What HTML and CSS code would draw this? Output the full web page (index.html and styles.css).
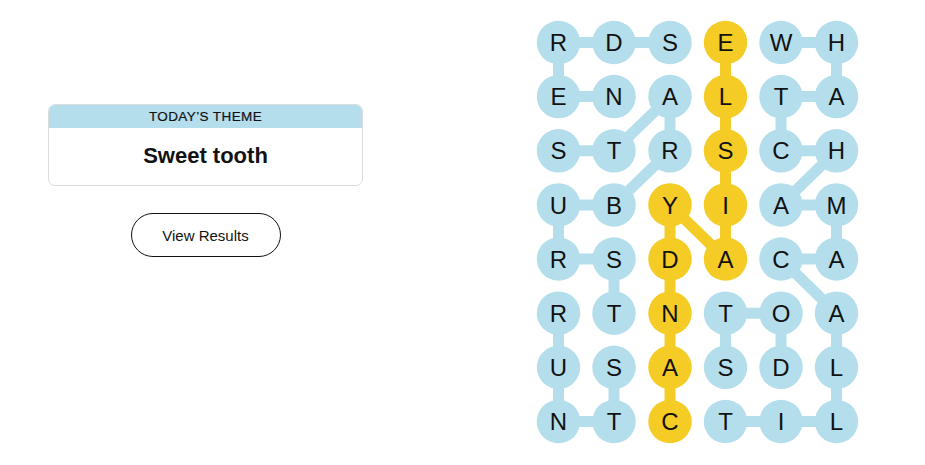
FILE: index.html
```html
<!DOCTYPE html>
<html lang="en">
<head>
<meta charset="utf-8">
<title>Strands</title>
<link rel="stylesheet" href="styles.css">
</head>
<body>
<main class="page">
  <section class="side">
    <div class="theme-card">
      <div class="theme-head">TODAY’S THEME</div>
      <div class="theme-body">Sweet tooth</div>
    </div>
    <button class="results-btn" type="button">View Results</button>
  </section>
  <section class="board">
    <svg class="board-svg" width="324" height="424" viewBox="0 0 324 424">
      <g class="lines-blue" stroke-width="11" stroke-linecap="butt">
        <!-- NERDS -->
        <line x1="78" y1="76.6" x2="22.5" y2="76.6"/>
        <line x1="22.5" y1="76.6" x2="22.5" y2="22.5"/>
        <line x1="22.5" y1="22.5" x2="134" y2="22.5"/>
        <!-- STARBURST -->
        <line x1="22.5" y1="130.8" x2="78" y2="130.8"/>
        <line x1="78" y1="130.8" x2="134" y2="76.6"/>
        <line x1="134" y1="76.6" x2="134" y2="130.8"/>
        <line x1="134" y1="130.8" x2="78" y2="184.9"/>
        <line x1="78" y1="184.9" x2="22.5" y2="184.9"/>
        <line x1="22.5" y1="184.9" x2="22.5" y2="239"/>
        <line x1="22.5" y1="239" x2="78" y2="239"/>
        <line x1="78" y1="239" x2="78" y2="293.2"/>
        <!-- RUNTS -->
        <line x1="22.5" y1="293.2" x2="22.5" y2="401.5"/>
        <line x1="22.5" y1="401.5" x2="78" y2="401.5"/>
        <line x1="78" y1="401.5" x2="78" y2="347.3"/>
        <!-- WHATCHAMACALLIT -->
        <line x1="245" y1="22.5" x2="300.5" y2="22.5"/>
        <line x1="300.5" y1="22.5" x2="300.5" y2="76.6"/>
        <line x1="300.5" y1="76.6" x2="245" y2="76.6"/>
        <line x1="245" y1="76.6" x2="245" y2="130.8"/>
        <line x1="245" y1="130.8" x2="300.5" y2="130.8"/>
        <line x1="300.5" y1="130.8" x2="245" y2="184.9"/>
        <line x1="245" y1="184.9" x2="300.5" y2="184.9"/>
        <line x1="300.5" y1="184.9" x2="300.5" y2="239"/>
        <line x1="300.5" y1="239" x2="245" y2="239"/>
        <line x1="245" y1="239" x2="300.5" y2="293.2"/>
        <line x1="300.5" y1="293.2" x2="300.5" y2="401.5"/>
        <line x1="300.5" y1="401.5" x2="189.5" y2="401.5"/>
        <!-- DOTS -->
        <line x1="245" y1="347.3" x2="245" y2="293.2"/>
        <line x1="245" y1="293.2" x2="189.5" y2="293.2"/>
        <line x1="189.5" y1="293.2" x2="189.5" y2="347.3"/>
      </g>
      <g class="lines-gold" stroke-width="11">
        <line x1="134" y1="401.5" x2="134" y2="184.9"/>
        <line x1="134" y1="184.9" x2="189.5" y2="239"/>
        <line x1="189.5" y1="239" x2="189.5" y2="22.5"/>
      </g>
      <g class="cells" id="cells"></g>
    </svg>
  </section>
</main>
<script src="board.js"></script>
</body>
</html>
```
FILE: board.js
```js
(function () {
  var rows = ["RDSEWH", "ENALTA", "STRSCH", "UBYIAM", "RSDACA", "RTNTOA", "USASDL", "NTCTIL"];
  var gold = { "0,3": 1, "1,3": 1, "2,3": 1, "3,3": 1, "4,3": 1, "3,2": 1, "4,2": 1, "5,2": 1, "6,2": 1, "7,2": 1 };
  var xs = [22.5, 78, 134, 189.5, 245, 300.5];
  var ys = [22.5, 76.6, 130.8, 184.9, 239, 293.2, 347.3, 401.5];
  var ns = "http://www.w3.org/2000/svg";
  var g = document.getElementById("cells");
  for (var r = 0; r < rows.length; r++) {
    for (var c = 0; c < 6; c++) {
      var circ = document.createElementNS(ns, "circle");
      circ.setAttribute("cx", xs[c]);
      circ.setAttribute("cy", ys[r]);
      circ.setAttribute("r", 21.75);
      circ.setAttribute("class", gold[r + "," + c] ? "cell cell-gold" : "cell cell-blue");
      g.appendChild(circ);
      var t = document.createElementNS(ns, "text");
      t.setAttribute("x", xs[c]);
      t.setAttribute("y", ys[r] + 8.6);
      t.setAttribute("class", "letter");
      t.textContent = rows[r].charAt(c);
      g.appendChild(t);
    }
  }
})();
```
FILE: styles.css
```css
html, body {
  margin: 0;
  padding: 0;
  background: #ffffff;
}

body {
  font-family: "Liberation Sans", Arial, sans-serif;
  color: #121212;
}

.page {
  display: flex;
  align-items: flex-start;
  width: 925px;
  height: 465px;
}

.side {
  display: flex;
  flex-direction: column;
  align-items: center;
  width: 315px;
  margin-left: 48px;
  margin-top: 104px;
}

.theme-card {
  width: 100%;
  box-sizing: border-box;
  border: 1px solid #dcdcdc;
  border-radius: 7px;
  overflow: hidden;
}

.theme-head {
  background: #b5deed;
  height: 24px;
  line-height: 25px;
  text-align: center;
  font-size: 13.5px;
  letter-spacing: 0.4px;
  color: #121212;
  margin: -1px -1px 0;
  -webkit-text-stroke: 0.2px #121212;
}

.theme-body {
  height: 57px;
  line-height: 55px;
  text-align: center;
  font-size: 22px;
  font-weight: 700;
  color: #121212;
}

.results-btn {
  margin-top: 27px;
  width: 150px;
  height: 44px;
  border: 1px solid #121212;
  border-radius: 22px;
  background: #ffffff;
  font-family: "Liberation Sans", Arial, sans-serif;
  font-size: 15px;
  color: #121212;
  padding: 0;
  cursor: pointer;
}

.board {
  margin-left: 173px;
  margin-top: 20px;
}

.board-svg {
  display: block;
}

.lines-blue line {
  stroke: #b5deed;
}

.lines-gold line {
  stroke: #f5cc25;
}

.cell-blue {
  fill: #b5deed;
}

.cell-gold {
  fill: #f5cc25;
}

.letter {
  font-family: "Liberation Sans", Arial, sans-serif;
  font-size: 24px;
  fill: #121212;
  text-anchor: middle;
}
```
